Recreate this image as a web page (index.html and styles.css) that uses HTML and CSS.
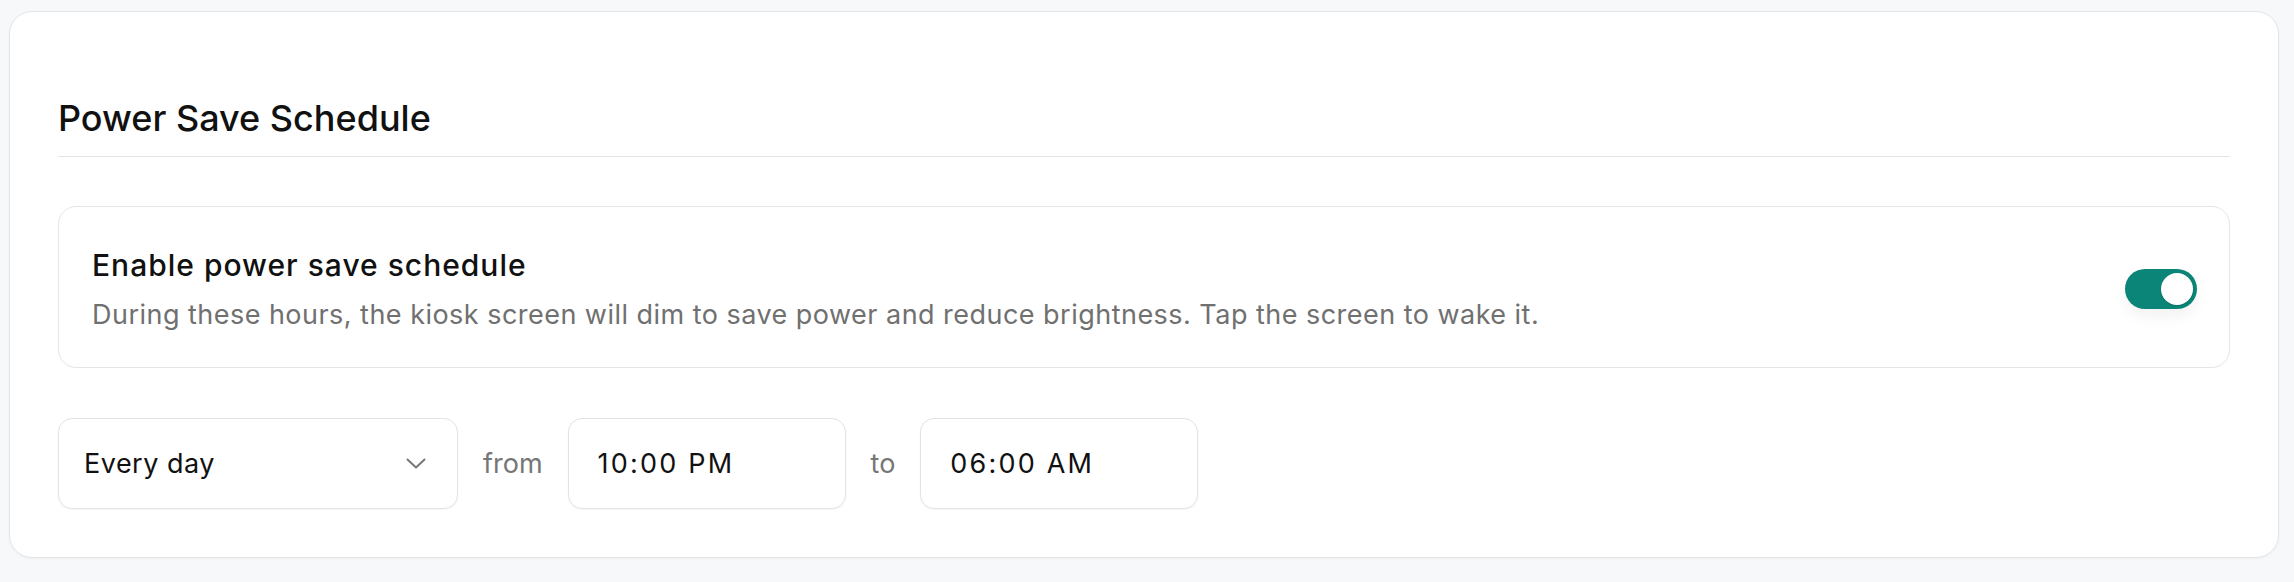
FILE: index.html
```html
<!DOCTYPE html>
<html lang="en">

<head>
    <meta charset="UTF-8">
    <meta name="viewport" content="width=device-width, initial-scale=1.0">
    <title>Power Save Schedule</title>
    <link rel="stylesheet" href="styles.css">
</head>

<body>

    <div class="page">
        <section class="card">
            <div class="card-header">
                <h2 class="card-title">Power Save Schedule</h2>
            </div>

            <div class="setting">
                <div class="setting-text">
                    <div class="setting-label">Enable power save schedule</div>
                    <p class="setting-desc">During these hours, the kiosk screen will dim to save power and reduce brightness. Tap the screen to wake it.</p>
                </div>
                <button class="toggle on" aria-label="Enable power save schedule"><span class="knob"></span></button>
            </div>

            <div class="schedule">
                <button class="select">
                    <span>Every day</span>
                    <svg class="chevron" width="20" height="11" viewBox="0 0 20 11">
                        <path d="M1.5 1.5 L10 9.5 L18.5 1.5" fill="none" stroke="#777" stroke-width="2" stroke-linecap="round" stroke-linejoin="round" />
                    </svg>
                </button>
                <span class="sep">from</span>
                <input class="time" type="text" value="10:00 PM">
                <span class="sep">to</span>
                <input class="time" type="text" value="06:00 AM">
            </div>
        </section>
    </div>

</body>

</html>
```

FILE: styles.css
```css
body {
    margin: 0;
    background-color: #f7f8fa;
    font-family: Inter, "Noto Sans", sans-serif;
    color: #111;
}

.page {
    padding: 11px 15px 24px 9px;
}

.card {
    background-color: #fff;
    border: 1px solid #e4e5e7;
    border-radius: 23px;
    padding: 48px;
    box-shadow: 0 1px 3px rgba(0, 0, 0, 0.04);
}

.card-header {
    padding: 31px 0 11px;
    border-bottom: 1px solid #e3e4e6;
}

.card-title {
    margin: 0;
    font-size: 36px;
    font-weight: 500;
    line-height: 54px;
    color: #111;
}

.setting {
    display: flex;
    align-items: center;
    justify-content: space-between;
    gap: 24px;
    margin-top: 49px;
    padding: 36px 32px 31px 33px;
    border: 1px solid #e4e5e7;
    border-radius: 18px;
}

.setting-label {
    font-size: 30px;
    font-weight: 500;
    line-height: 45px;
    letter-spacing: 1px;
}

.setting-desc {
    margin: 7px 0 0;
    font-size: 27px;
    line-height: 40.5px;
    letter-spacing: 0.47px;
    color: #707070;
}

.toggle {
    flex-shrink: 0;
    display: flex;
    justify-content: flex-end;
    align-items: center;
    width: 72px;
    height: 40px;
    padding: 4px;
    border: none;
    border-radius: 20px;
    background-color: #0a8577;
    box-shadow: 0 8px 14px rgba(0, 0, 0, 0.05);
    cursor: pointer;
}

.knob {
    width: 32px;
    height: 32px;
    border-radius: 50%;
    background-color: #fff;
    box-shadow: 0 1px 2px rgba(0, 0, 0, 0.15);
}

.schedule {
    display: flex;
    align-items: center;
    gap: 25px;
    margin-top: 50px;
}

.select,
.time {
    box-sizing: border-box;
    height: 91px;
    border: 1px solid #e2e3e5;
    border-radius: 14px;
    background-color: #fff;
    font-family: inherit;
    font-size: 27px;
    color: #111;
    box-shadow: 0 1px 2px rgba(0, 0, 0, 0.04);
}

.select {
    display: flex;
    align-items: center;
    justify-content: space-between;
    width: 400px;
    padding: 0 31px 0 25px;
    letter-spacing: 0.5px;
    cursor: pointer;
    text-align: left;
}

.time {
    width: 278px;
    padding: 0 27px 0 29px;
    letter-spacing: 2.2px;
    outline: none;
}

.sep {
    font-size: 27px;
    color: #767676;
}
```
